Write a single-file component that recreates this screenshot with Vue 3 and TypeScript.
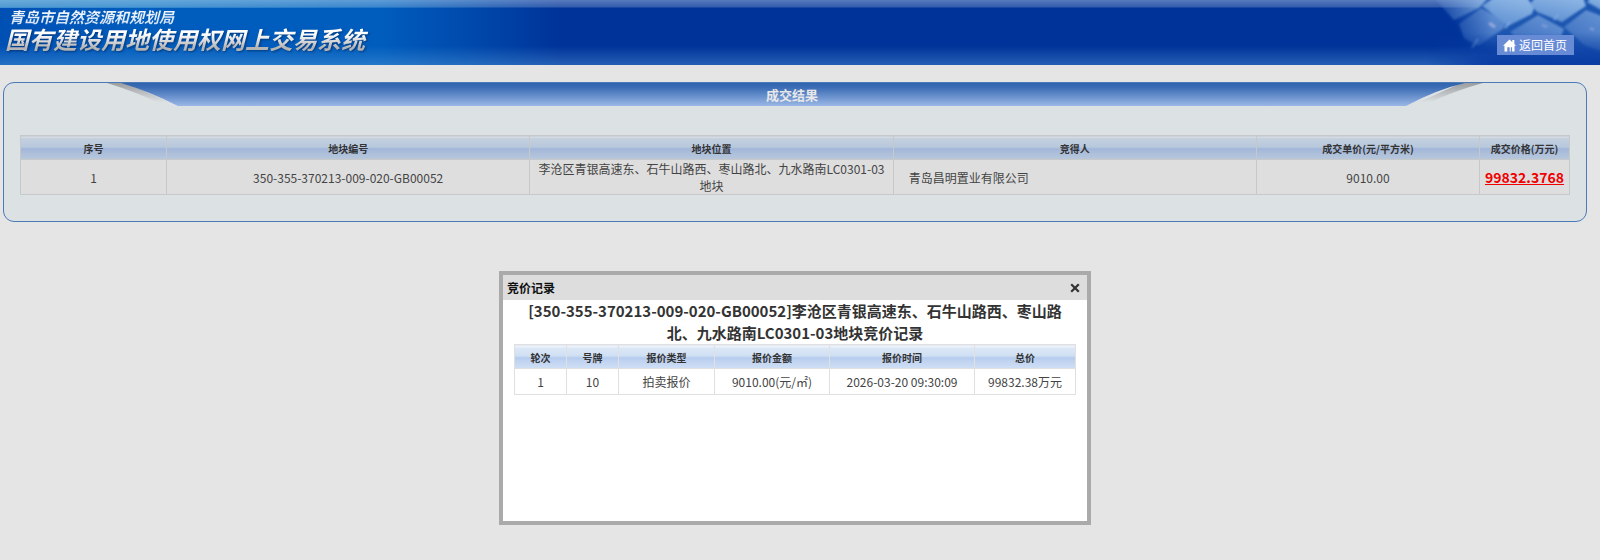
<script setup lang="ts">
interface Lot {
  no: number
  code: string
  place: string
  winner: string
  unit: string
  total: string
}

interface Bid {
  round: number
  plate: string
  kind: string
  amount: string
  time: string
  total: string
}

const lots: Lot[] = [
  {
    no: 1,
    code: '350-355-370213-009-020-GB00052',
    place: '李沧区青银高速东、石牛山路西、枣山路北、九水路南LC0301-03地块',
    winner: '青岛昌明置业有限公司',
    unit: '9010.00',
    total: '99832.3768',
  },
]

const bids: Bid[] = [
  {
    round: 1,
    plate: '10',
    kind: '拍卖报价',
    amount: '9010.00(元/㎡)',
    time: '2026-03-20 09:30:09',
    total: '99832.38万元',
  },
]
</script>

<template>
  <div class="page">
    <header class="top">
      <svg class="keys" viewBox="0 0 180 65" aria-hidden="true">
        <defs>
          <linearGradient id="key" x1="0" y1="1" x2="0.6" y2="0">
            <stop offset="0" stop-color="#2f64ba" />
            <stop offset="1" stop-color="#6290d2" />
          </linearGradient>
          <linearGradient id="keyTop" x1="0" y1="1" x2="0.4" y2="0">
            <stop offset="0" stop-color="#588bd0" />
            <stop offset="1" stop-color="#8cb5e4" />
          </linearGradient>
          <linearGradient id="fadeX" x1="0" y1="0" x2="1" y2="0">
            <stop offset="0.04" stop-color="#000" />
            <stop offset="0.4" stop-color="#fff" />
          </linearGradient>
          <linearGradient id="fadeY" x1="0" y1="0" x2="0" y2="1">
            <stop offset="0.5" stop-color="#0b3ea4" stop-opacity="0" />
            <stop offset="0.95" stop-color="#0b3ea4" stop-opacity="1" />
          </linearGradient>
          <mask id="fade"><rect width="180" height="65" fill="url(#fadeX)" /></mask>
          <filter id="soft"><feGaussianBlur stdDeviation="1" /></filter>
          <filter id="haze" x="-20%" y="-20%" width="140%" height="140%"><feGaussianBlur stdDeviation="5" /></filter>
        </defs>
        <g mask="url(#fade)">
          <path d="M20 -10 L40 22 L52 44 L100 52 L190 60 V-10 Z" fill="#1f56b0" filter="url(#haze)" />
          <g filter="url(#soft)">
            <path d="M14 -2 L68 -2 L59 8 L34 20 Z" fill="url(#keyTop)" />
            <path d="M39 24 L61 8 L86 22 L83 29 L58 46 L44 38 Z" fill="url(#key)" />
            <path d="M62 6 L76 -4 L106 -4 L114 8 L112 14 L88 26 Z" fill="url(#keyTop)" />
            <path d="M90 32 L118 15 L144 29 L140 39 L112 53 Z" fill="url(#key)" />
            <path d="M110 4 L118 -6 L162 -6 L166 6 L142 22 L117 12 Z" fill="url(#keyTop)" />
            <path d="M144 27 L166 10 L190 19 V55 L164 45 Z" fill="url(#key)" />
            <path d="M167 2 L172 -4 H190 V15 Z" fill="url(#keyTop)" />
            <path d="M52 48 L58 39 M85 28 L90 22 M134 20 L138 14" stroke="#7ba8e2" stroke-width="2" />
            <path d="M69 23 L75 27" stroke="#93aade" stroke-width="3" />
            <path d="M122 25 L127 27 M170 28 L174 30" stroke="#7f9edb" stroke-width="2" />
          </g>
          <rect width="180" height="65" fill="url(#fadeY)" />
        </g>
      </svg>
      <div class="brand">
        <p class="bureau">青岛市自然资源和规划局</p>
        <h1 class="system">国有建设用地使用权网上交易系统</h1>
      </div>
      <a class="home" href="#">
        <svg viewBox="0 0 14 14" aria-hidden="true">
          <path d="M7 0.5 L10 3.4 V1.2 H12.2 V5.4 L14 7.4 H12.4 V13.5 H9.8 V9 H8.4 V13.5 H7.2 V9 H4.6 V13.5 H1.6 V7.4 H0 Z" fill="#fff" />
        </svg>
        <span>返回首页</span>
      </a>
    </header>

    <main class="panel">
      <div class="ribbon">
        <svg class="cap" viewBox="0 0 72 24" preserveAspectRatio="none" aria-hidden="true">
          <defs>
            <linearGradient id="blue" gradientUnits="userSpaceOnUse" x1="0" y1="0" x2="0" y2="24">
              <stop offset="0" stop-color="#2f65ad" />
              <stop offset="0.2" stop-color="#3c6db5" />
              <stop offset="1" stop-color="#9ab7e6" />
            </linearGradient>
            <linearGradient id="shade" x1="0" y1="0" x2="0" y2="1">
              <stop offset="0" stop-color="#9b9d9f" />
              <stop offset="1" stop-color="#dbe0e3" />
            </linearGradient>
          </defs>
          <path d="M0 0 Q28 9 50 20 L62 20 L20 0 Z" fill="url(#shade)" />
          <path d="M14 0 Q43 9 71 24 H73 V0 Z" fill="url(#blue)" />
        </svg>
        <h2 class="ribbon-title">成交结果</h2>
        <svg class="cap end" viewBox="0 0 78 24" preserveAspectRatio="none" aria-hidden="true">
          <path d="M78 0 Q50 8 26 20 L14 20 L56 0 Z" fill="url(#shade)" />
          <path d="M60 0 Q31 7 1 24 H-1 V0 Z" fill="url(#blue)" />
        </svg>
      </div>

      <table class="grid lots">
        <colgroup>
          <col class="l1" /><col class="l2" /><col class="l3" /><col class="l4" /><col class="l5" /><col class="l6" />
        </colgroup>
        <thead>
          <tr>
            <th>序号</th>
            <th>地块编号</th>
            <th>地块位置</th>
            <th>竞得人</th>
            <th>成交单价(元/平方米)</th>
            <th>成交价格(万元)</th>
          </tr>
        </thead>
        <tbody>
          <tr v-for="lot in lots" :key="lot.no">
            <td>{{ lot.no }}</td>
            <td>{{ lot.code }}</td>
            <td>{{ lot.place }}</td>
            <td class="winner">{{ lot.winner }}</td>
            <td>{{ lot.unit }}</td>
            <td><a class="price" href="#">{{ lot.total }}</a></td>
          </tr>
        </tbody>
      </table>
    </main>

    <section class="dialog" role="dialog" aria-labelledby="dialog-title">
      <div class="dialog-bar">
        <h2 id="dialog-title">竞价记录</h2>
        <button class="close" type="button" aria-label="关闭">
          <svg viewBox="0 0 10 10" aria-hidden="true">
            <path d="M1.2 1.2 L8.8 8.8 M8.8 1.2 L1.2 8.8" stroke="#333" stroke-width="2.2" />
          </svg>
        </button>
      </div>
      <div class="dialog-body">
        <h3>[350-355-370213-009-020-GB00052]李沧区青银高速东、石牛山路西、枣山路北、九水路南LC0301-03地块竞价记录</h3>
        <table class="grid bids">
          <colgroup>
            <col class="b1" /><col class="b2" /><col class="b3" /><col class="b4" /><col class="b5" /><col class="b6" />
          </colgroup>
          <thead>
            <tr>
              <th>轮次</th>
              <th>号牌</th>
              <th>报价类型</th>
              <th>报价金额</th>
              <th>报价时间</th>
              <th>总价</th>
            </tr>
          </thead>
          <tbody>
            <tr v-for="bid in bids" :key="bid.round">
              <td>{{ bid.round }}</td>
              <td>{{ bid.plate }}</td>
              <td>{{ bid.kind }}</td>
              <td>{{ bid.amount }}</td>
              <td>{{ bid.time }}</td>
              <td>{{ bid.total }}</td>
            </tr>
          </tbody>
        </table>
      </div>
    </section>
  </div>
</template>

<style>
body {
  background: #e5e5e5;
}
</style>

<style scoped>
.page {
  position: relative;
  min-height: 100vh;
  box-sizing: border-box;
  font-family: "Noto Sans CJK SC", "Noto Sans", sans-serif;
  color: #444;
}
h1, h2, h3, p {
  margin: 0;
}
.top {
  position: relative;
  display: flex;
  justify-content: space-between;
  align-items: flex-start;
  height: 65px;
  background:
    linear-gradient(90deg, rgba(130, 215, 235, 0.4), rgba(130, 215, 235, 0) 500px) 0 0 / 100% 8px no-repeat,
    linear-gradient(180deg, rgba(255, 255, 255, 0.35), rgba(255, 255, 255, 0.2) 7px, transparent 8px),
    linear-gradient(180deg, transparent 46px, rgba(90, 160, 220, 0.4)),
    linear-gradient(90deg, #0050b4, #005cbd 130px, #005dbd 380px, #0049ac 470px, #003399 560px);
}
.keys {
  position: absolute;
  top: 0;
  right: 0;
  width: 180px;
  height: 65px;
}
.brand {
  padding: 7px 0 0 5px;
}
.bureau,
.system {
  width: max-content;
  padding-right: 8px;
  font-style: italic;
  font-weight: 700;
  color: transparent;
  background-clip: text;
}
.bureau {
  padding-left: 4px;
  font-size: 15px;
  line-height: 20px;
  background-image: linear-gradient(#fff, #c9dcf4);
}
.system {
  font-size: 24px;
  line-height: 24px;
  background-image: linear-gradient(#fff 30%, #b5b5b5 85%);
  filter: drop-shadow(1px 1px 1px rgba(0, 30, 80, 0.6));
}
.home {
  position: relative;
  display: flex;
  align-items: center;
  gap: 3px;
  box-sizing: border-box;
  height: 20px;
  margin: 35px 26px 0 0;
  padding: 0 7px 0 6px;
  background: #688bd6;
  color: #fff;
  font-size: 12px;
  line-height: 20px;
  text-decoration: none;
}
.home svg {
  width: 13px;
  height: 13px;
}
.panel {
  margin: 17px 13px 0 3px;
  padding: 0 16px 26px;
  border: 1px solid #4a7ab8;
  border-radius: 11px;
  background: #dce1e4;
}
.ribbon {
  display: flex;
  height: 23px;
  margin: 0 87px 29px;
}
.cap {
  flex: none;
  width: 72px;
  height: 23px;
}
.cap.end {
  width: 78px;
}
.ribbon-title {
  flex: 1;
  background: linear-gradient(#2f65ad, #3c6db5 20%, #9ab7e6);
  color: #e8e8e8;
  font-size: 13px;
  line-height: 24px;
  text-align: center;
}
.grid {
  width: 100%;
  border-collapse: collapse;
  table-layout: fixed;
  font-size: 12px;
  line-height: 17px;
  text-align: center;
}
.grid th,
.grid td {
  padding: 0;
}
.grid th {
  box-sizing: border-box;
  height: 24px;
  padding-top: 3px;
  color: #333;
  font-size: 10px;
  line-height: 14px;
}
.lots th,
.lots td {
  border: 1px solid #c6c8ca;
}
.lots th {
  background: linear-gradient(#dadcde 1px, #c2cfdf 2px, #b8c8dc 11px, #9fb4da 12px, #a9bcd9 15px, #b8c8dc);
}
.lots td {
  height: 34px;
  padding: 0 8px;
  background: #dedede;
}
.lots td.winner {
  padding-left: 15px;
  text-align: left;
}
.lots td:last-child {
  padding: 0;
}
.l1 { width: 146px; }
.l2, .l3, .l4 { width: 24%; }
.l5 { width: 223px; }
.l6 { width: 90px; }
.price {
  color: #f00000;
  font-size: 14px;
  font-weight: 700;
}
.dialog {
  position: absolute;
  top: 271px;
  left: 499px;
  box-sizing: border-box;
  width: 592px;
  height: 254px;
  border: 4px solid #aaa;
  background: #fff;
}
.dialog-bar {
  display: flex;
  justify-content: space-between;
  align-items: center;
  height: 25px;
  padding: 0 7px 0 4px;
  background: #ddd;
}
.dialog-bar h2 {
  color: #111;
  font-size: 12px;
  line-height: 25px;
}
.close {
  display: flex;
  padding: 0;
  border: 0;
  background: none;
}
.close svg {
  width: 10px;
  height: 10px;
}
.dialog-body {
  padding: 0 11px;
}
.dialog-body h3 {
  padding: 0 8px;
  color: #333;
  font-size: 15px;
  line-height: 22px;
  text-align: center;
}
.bids th,
.bids td {
  border: 1px solid #e0e0e0;
}
.bids th {
  background: linear-gradient(#f4f6f8 1px, #dce8f6 2px, #cfdff3 11px, #b3caee 12px, #bfd2f0 15px, #cfdff5);
}
.bids td {
  height: 25px;
}
.b1, .b2 { width: 52px; }
.b3 { width: 96px; }
.b4 { width: 115px; }
.b5 { width: 145px; }
</style>
